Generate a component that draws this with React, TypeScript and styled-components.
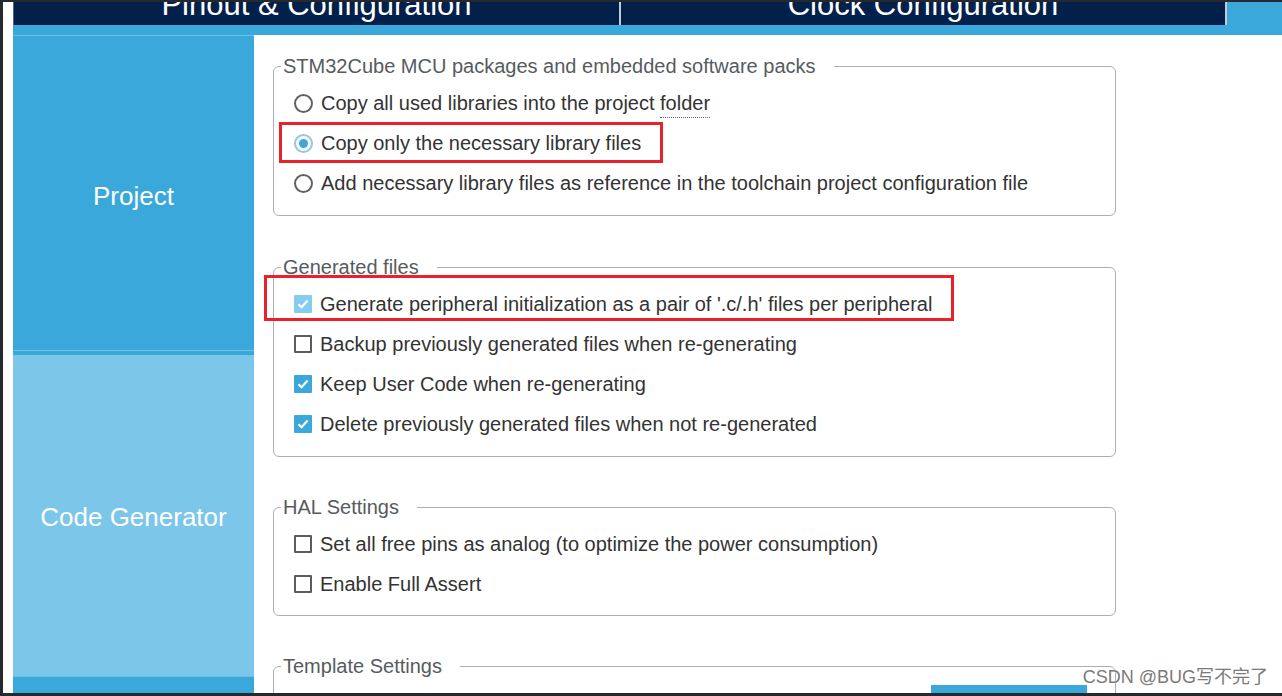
import styled, { createGlobalStyle } from "styled-components";

const GlobalStyle = createGlobalStyle`
  html, body {
    margin: 0;
    padding: 0;
    background: #25282c;
  }
  * {
    box-sizing: border-box;
  }
`;

const Screen = styled.div`
  position: relative;
  width: 1282px;
  height: 696px;
  padding: 2px 0 3px 3px;
  background: #25282c;
  overflow: hidden;
  font-family: "Liberation Sans", Arial, sans-serif;
`;

const Window = styled.div`
  display: flex;
  flex-direction: column;
  height: 100%;
  padding-left: 10px;
  background: #fff;
`;

const TabBar = styled.div`
  display: flex;
  height: 23px;
  background: #3aa8db;
`;

const Tab = styled.div<{ $width: number; $first?: boolean }>`
  width: ${(p) => p.$width}px;
  overflow: hidden;
  background: #03204a;
  border-left: ${(p) => (p.$first ? "1px solid #56657c" : "none")};
  border-right: 2px solid #c3ccd6;
  color: #fff;
  font-size: 31px;
  line-height: 31px;
  text-align: center;
  white-space: nowrap;
`;

const TabLabel = styled.div`
  margin-top: -13px;
`;

const Strip = styled.div`
  height: 10px;
  background: #3aa8db;
`;

const Body = styled.div`
  display: flex;
  flex: 1;
  min-height: 0;
`;

const Sidebar = styled.nav`
  display: flex;
  flex-direction: column;
  width: 241px;
  background: #3aa8db;
`;

const SideItem = styled.div<{ $light?: boolean; $height?: number }>`
  display: flex;
  align-items: center;
  justify-content: center;
  height: ${(p) => (p.$height ? `${p.$height}px` : "auto")};
  flex: ${(p) => (p.$height ? "none" : "1")};
  padding-top: ${(p) => (p.$light ? "8px" : "6px")};
  border-top: 1px solid ${(p) => (p.$light ? "#6fc1e8" : "#6cbfe6")};
  background: ${(p) => (p.$light ? "#7cc6ea" : "#3aa8db")};
  box-shadow: ${(p) => (p.$light ? "inset 0 4px 0 #3aa8db" : "none")};
  color: #fff;
  font-size: 26px;
`;

const Content = styled.main`
  flex: 1;
  position: relative;
  overflow: hidden;
  padding: 19px 0 0 19px;
  background: #fff;
`;

const Group = styled.fieldset<{ $gap?: number; $pb?: number }>`
  width: 843px;
  margin: 0 0 ${(p) => p.$gap ?? 38}px 0;
  padding: 5px 0 ${(p) => p.$pb ?? 12}px 0;
  border: 1px solid #aab0b6;
  border-radius: 6px;
  min-width: 0;
`;

const Legend = styled.legend`
  margin-left: 7px;
  padding: 0 18px 0 2px;
  color: #565b61;
  font-size: 20px;
  line-height: 24px;
`;

const Row = styled.div`
  position: relative;
  display: flex;
  align-items: center;
  gap: 8px;
  height: 40px;
  padding-left: 20px;
  color: #333;
  font-size: 20px;
  white-space: nowrap;
`;

const Radio = styled.span<{ $on?: boolean }>`
  display: flex;
  align-items: center;
  justify-content: center;
  width: 19px;
  height: 19px;
  border-radius: 50%;
  border: 2px solid ${(p) => (p.$on ? "#97c8e3" : "#606366")};
  background: #fff;

  &::after {
    content: "";
    display: ${(p) => (p.$on ? "block" : "none")};
    width: 9px;
    height: 9px;
    border-radius: 50%;
    background: #3aa8db;
  }
`;

const Box = styled.span<{ $state: "off" | "on" | "dim" }>`
  display: flex;
  align-items: center;
  justify-content: center;
  width: 18px;
  height: 18px;
  border-radius: 1px;
  border: ${(p) => (p.$state === "off" ? "2px solid #5a5d60" : "none")};
  background: ${(p) =>
    p.$state === "on" ? "#3aa8db" : p.$state === "dim" ? "#84cdef" : "#fff"};
`;

const Dotted = styled.span`
  padding-bottom: 3px;
  border-bottom: 1px dotted #6b6b6b;
`;

const Mark = styled.div<{ $left: number; $top: number; $w: number; $h: number }>`
  position: absolute;
  left: ${(p) => p.$left}px;
  top: ${(p) => p.$top}px;
  width: ${(p) => p.$w}px;
  height: ${(p) => p.$h}px;
  border: 3px solid #e8212b;
  pointer-events: none;
`;

const ButtonRow = styled.div`
  display: flex;
  justify-content: flex-end;
  padding: 2px 28px 0 0;
`;

const BlueButton = styled.div`
  width: 156px;
  height: 30px;
  background: #3aa8db;
`;

const Watermark = styled.div`
  position: absolute;
  right: 14px;
  bottom: 8px;
  color: #7a7a7a;
  font-family: "Liberation Sans", "Noto Sans CJK SC", sans-serif;
  font-size: 18px;
  text-shadow: 0 0 2px #fff;
`;

const Check = () => (
  <svg width="14" height="14" viewBox="0 0 14 14">
    <path d="M2.5 7.2 L5.6 10.2 L11.6 3.6" fill="none" stroke="#fff" strokeWidth="2.2" />
  </svg>
);

const CheckItem = ({ state, children }: { state: "off" | "on" | "dim"; children: React.ReactNode }) => (
  <Row>
    <Box $state={state}>{state !== "off" && <Check />}</Box>
    {children}
  </Row>
);

export default function App() {
  return (
    <Screen>
      <GlobalStyle />
      <Window>
        <TabBar>
          <Tab $width={608} $first>
            <TabLabel>Pinout &amp; Configuration</TabLabel>
          </Tab>
          <Tab $width={606}>
            <TabLabel>Clock Configuration</TabLabel>
          </Tab>
        </TabBar>
        <Strip />
        <Body>
          <Sidebar>
            <SideItem $height={315}>Project</SideItem>
            <SideItem $light $height={326}>Code Generator</SideItem>
            <SideItem />
          </Sidebar>
          <Content>
            <Group $gap={39}>
              <Legend>STM32Cube MCU packages and embedded software packs</Legend>
              <Row>
                <Radio />
                <span>
                  Copy all used libraries into the project <Dotted>folder</Dotted>
                </span>
              </Row>
              <Row>
                <Radio $on />
                Copy only the necessary library files
                <Mark $left={5} $top={-1} $w={384} $h={41} />
              </Row>
              <Row>
                <Radio />
                Add necessary library files as reference in the toolchain project configuration file
              </Row>
            </Group>

            <Group>
              <Legend>Generated files</Legend>
              <CheckItem state="dim">
                Generate peripheral initialization as a pair of '.c/.h' files per peripheral
                <Mark $left={-10} $top={-9} $w={690} $h={46} />
              </CheckItem>
              <CheckItem state="off">Backup previously generated files when re-generating</CheckItem>
              <CheckItem state="on">Keep User Code when re-generating</CheckItem>
              <CheckItem state="on">Delete previously generated files when not re-generated</CheckItem>
            </Group>

            <Group $pb={11} $gap={38}>
              <Legend>HAL Settings</Legend>
              <CheckItem state="off">Set all free pins as analog (to optimize the power consumption)</CheckItem>
              <CheckItem state="off">Enable Full Assert</CheckItem>
            </Group>

            <Group>
              <Legend>Template Settings</Legend>
              <ButtonRow>
                <BlueButton />
              </ButtonRow>
            </Group>
          </Content>
        </Body>
      </Window>
      <Watermark>CSDN @BUG写不完了</Watermark>
    </Screen>
  );
}
